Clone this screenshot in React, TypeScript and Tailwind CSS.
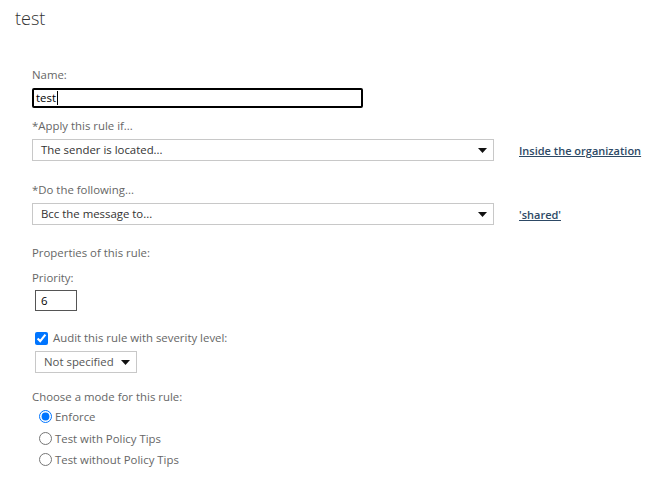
import React from 'react';

function Caret(): JSX.Element {
  return (
    <svg width="9" height="5" viewBox="0 0 9 5" className="shrink-0">
      <path d="M0 0h9L4.5 5z" fill="#111" />
    </svg>
  );
}

function FakeSelect({ value, className }: { value: string; className: string }): JSX.Element {
  return (
    <div
      className={`flex items-center justify-between border border-[#c8c8c8] bg-white pl-[8px] pr-[6px] text-[11.4px] text-[#333] ${className}`}
    >
      <span>{value}</span>
      <Caret />
    </div>
  );
}

function Label({ children, className = '' }: { children: React.ReactNode; className?: string }): JSX.Element {
  return <div className={`h-[16px] text-[11.4px] leading-[16px] text-[#666] ${className}`}>{children}</div>;
}

const modes = ['Enforce', 'Test with Policy Tips', 'Test without Policy Tips'];

export default function App(): JSX.Element {
  return (
    <div className="h-[484px] w-[667px] bg-white font-['Segoe_UI','Open_Sans',sans-serif] text-[11.4px]">
      <h1 className="pl-[15px] pt-[5px] text-[18px] font-light leading-[27px] text-[#333]">test</h1>

      <div className="flex flex-col pl-[32px]">
        <Label className="mt-[35px]">Name:</Label>
        <div className="mt-[5px] flex h-[20px] w-[331px] items-center rounded-[2px] border-2 border-black pl-[2px] text-[11.4px] text-black">
          test<span className="ml-px h-[14px] w-px bg-black" />
        </div>

        <Label className="mt-[10px]">*Apply this rule if...</Label>
        <div className="mt-[5px] flex items-center">
          <FakeSelect value="The sender is located..." className="h-[22px] w-[462px]" />
          <a className="ml-[25px] mt-[3px] text-[11px] font-semibold text-[#2d4965] underline">Inside the organization</a>
        </div>

        <Label className="mt-[21px]">*Do the following...</Label>
        <div className="mt-[5px] flex items-center">
          <FakeSelect value="Bcc the message to..." className="h-[22px] w-[462px]" />
          <a className="ml-[25px] mt-[3px] text-[11px] font-semibold text-[#2d4965] underline">'shared'</a>
        </div>

        <Label className="mt-[20px]">Properties of this rule:</Label>
        <Label className="mt-[9px]">Priority:</Label>
        <div className="ml-[3px] mt-[4px] flex h-[21px] w-[42px] items-center border border-[#555] pl-[5px] text-[11.4px] text-black">
          6
        </div>

        <label className="ml-[3px] mt-[19px] flex h-[16px] items-center gap-[5px] text-[11.4px] text-[#666]">
          <input type="checkbox" defaultChecked className="m-0 h-[13px] w-[13px] accent-[#0075ff]" />
          Audit this rule with severity level:
        </label>
        <FakeSelect value="Not specified" className="ml-[3px] mt-[5px] h-[22px] w-[102px] text-[#555]" />

        <Label className="mt-[16px]">Choose a mode for this rule:</Label>
        <div className="ml-[7px] mt-[1px] flex flex-col">
          {modes.map((mode, i) => (
            <label key={mode} className="flex h-[21.5px] items-center gap-[3px] text-[11.4px] text-[#666]">
              <input
                type="radio"
                name="mode"
                defaultChecked={i === 0}
                className="m-0 h-[13px] w-[13px] accent-[#0075ff]"
              />
              {mode}
            </label>
          ))}
        </div>
      </div>
    </div>
  );
}
